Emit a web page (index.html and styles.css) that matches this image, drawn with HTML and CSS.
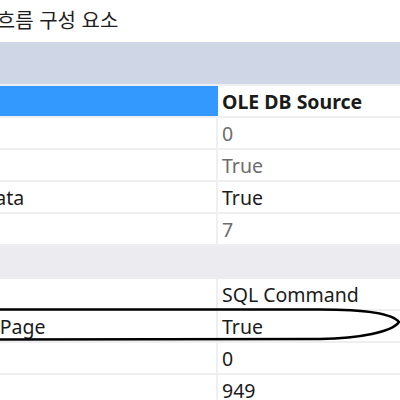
FILE: index.html
```html
<!DOCTYPE html>
<html lang="ko">
<head>
<meta charset="utf-8">
<link rel="stylesheet" href="styles.css">
</head>
<body>
<div class="pane">
  <div class="title"><span class="title-text">데이터 흐름 구성 요소</span></div>
  <div class="toolbar"></div>
  <div class="strip"></div>
  <div class="grid">
    <div class="row selected"><div class="name">Name</div><div class="value bold">OLE DB Source</div></div>
    <div class="row"><div class="name">LocaleID</div><div class="value dim">0</div></div>
    <div class="row"><div class="name">UsesDispositions</div><div class="value dim">True</div></div>
    <div class="row"><div class="name">ValidateExternalMetadata</div><div class="value">True</div></div>
    <div class="row"><div class="name">Version</div><div class="value dim">7</div></div>
    <div class="category"><span class="cat-text">Custom Properties</span></div>
    <div class="row"><div class="name">AccessMode</div><div class="value">SQL Command</div></div>
    <div class="row"><div class="name">AlwaysUseDefaultCodePage</div><div class="value">True</div></div>
    <div class="row"><div class="name">CommandTimeout</div><div class="value">0</div></div>
    <div class="row"><div class="name">DefaultCodePage</div><div class="value">949</div></div>
  </div>
  <svg class="mark" width="400" height="40" viewBox="0 0 400 40">
    <path d="M-10,2.5 L320,2.5 C360,2.5 392,6 399,15 C392,25 360,31.5 320,32 L-10,32.5" fill="none" stroke="#000" stroke-width="2.6"/>
  </svg>
</div>
</body>
</html>
```

FILE: styles.css
```css
html, body {
  margin: 0;
  padding: 0;
  background: #ffffff;
}
body {
  width: 400px;
  height: 400px;
  overflow: hidden;
  font-family: "Noto Sans", "Noto Sans CJK KR", sans-serif;
  font-size: 19.5px;
  color: #1b1b1b;
}
.pane {
  position: relative;
  width: 400px;
  height: 400px;
  overflow: hidden;
}
.title {
  height: 42px;
  display: flex;
  align-items: center;
  white-space: nowrap;
  font-family: "Noto Sans CJK KR", sans-serif;
  font-size: 20px;
  color: #1e1e1e;
}
.title-text {
  margin-left: -64px;
  padding-bottom: 3px;
}
.toolbar {
  height: 42px;
  background: #cfd6e5;
}
.strip {
  height: 2px;
  background: #eeeff3;
}
.grid {
  margin-left: -232px;
  display: flex;
  flex-direction: column;
}
.row {
  display: flex;
  height: 32px;
  box-sizing: border-box;
  border-bottom: 2px solid #efeff1;
}
.name {
  width: 450px;
  flex: none;
  box-sizing: border-box;
  padding-left: 20px;
  border-right: 2px solid #efeff1;
  display: flex;
  align-items: center;
  white-space: nowrap;
  overflow: hidden;
}
.value {
  flex: 1;
  padding-left: 4px;
  display: flex;
  align-items: center;
  white-space: nowrap;
}
.selected .name {
  background: #3399ff;
  color: #ffffff;
  border-right-color: #3399ff;
}
.bold {
  font-weight: 700;
}
.dim {
  color: #6d6d6d;
}
.category {
  height: 33px;
  background: #ececf0;
  display: flex;
  align-items: center;
  padding-left: 20px;
  font-weight: 700;
}
.cat-text {
  visibility: hidden;
}
.mark {
  position: absolute;
  left: 0;
  top: 307px;
}
```
